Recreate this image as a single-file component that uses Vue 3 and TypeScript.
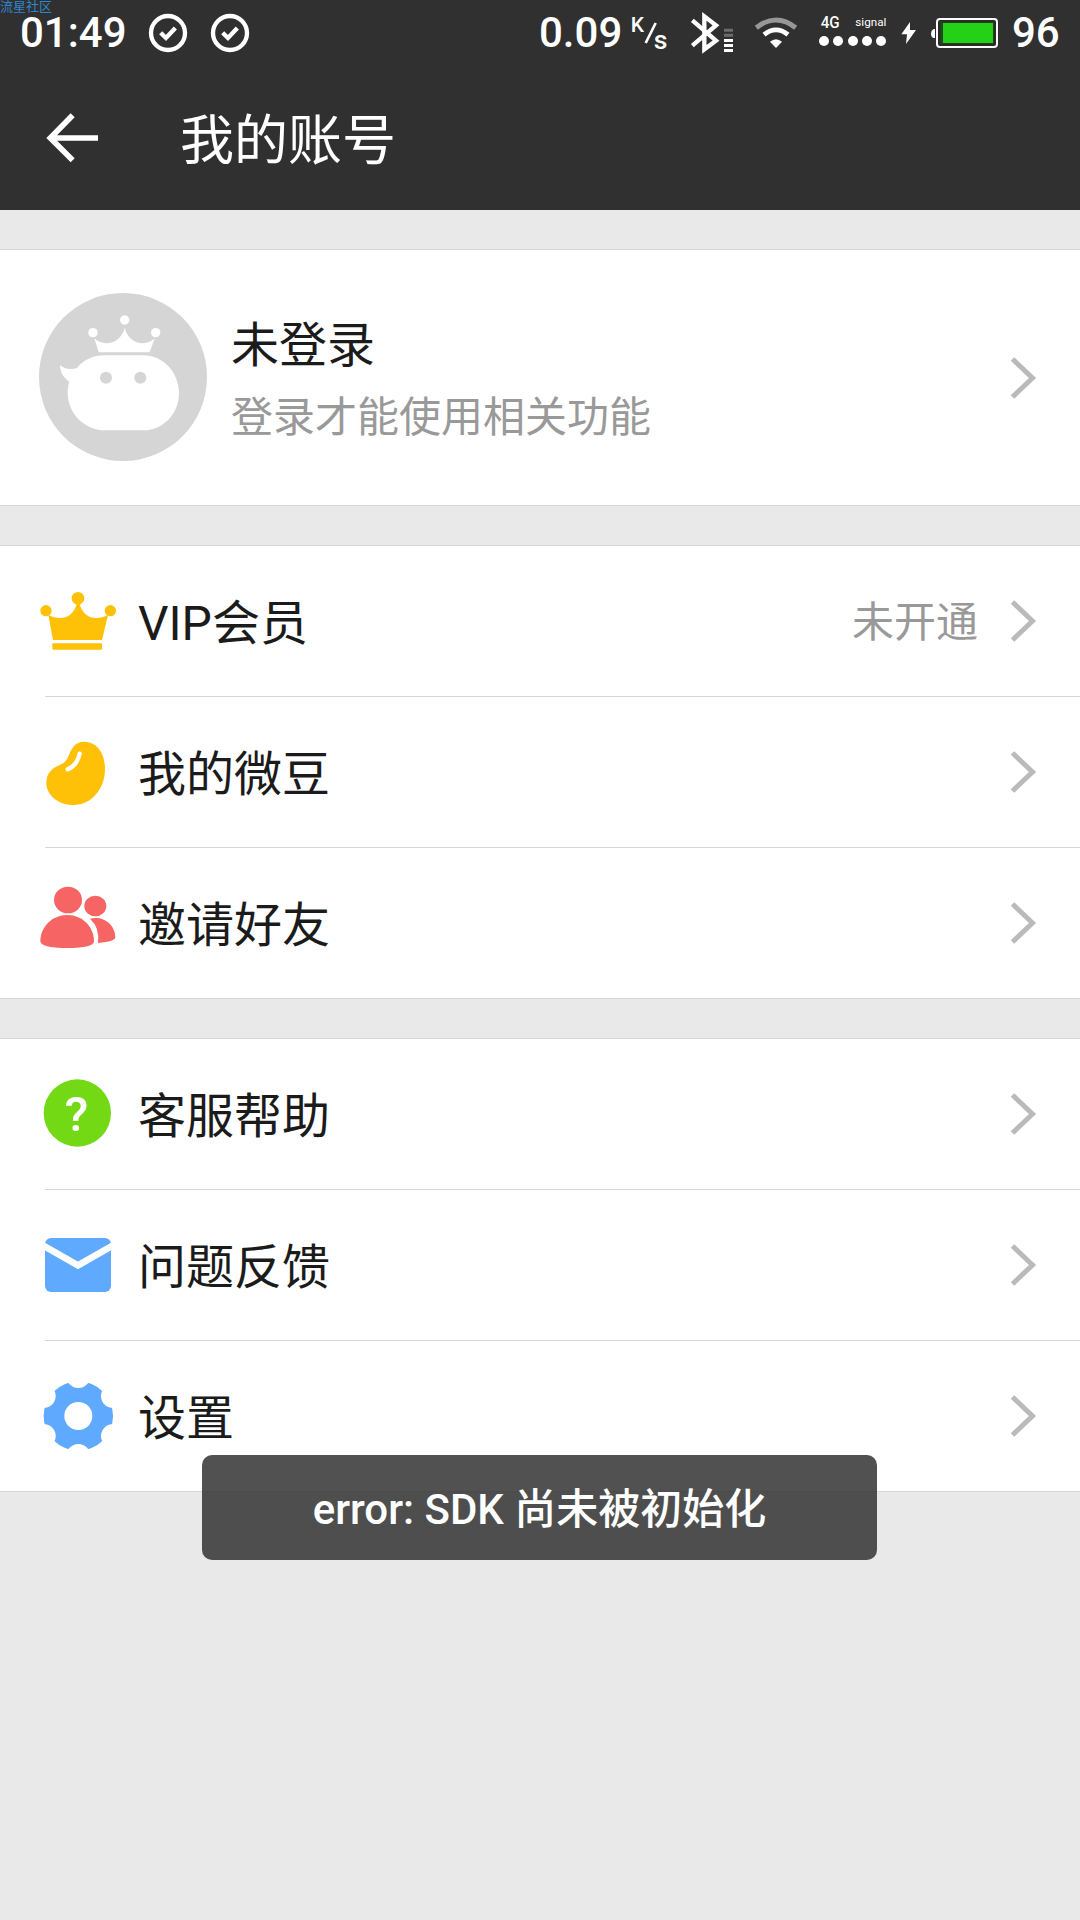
<script setup lang="ts">
type IconName = 'crown' | 'bean' | 'friends' | 'help' | 'mail' | 'gear'

interface MenuItem {
  icon: IconName
  label: string
  value?: string
}

const groups: MenuItem[][] = [
  [
    { icon: 'crown', label: 'VIP会员', value: '未开通' },
    { icon: 'bean', label: '我的微豆' },
    { icon: 'friends', label: '邀请好友' },
  ],
  [
    { icon: 'help', label: '客服帮助' },
    { icon: 'mail', label: '问题反馈' },
    { icon: 'gear', label: '设置' },
  ],
]

const viewBoxes: Record<IconName, string> = {
  crown: '108 18 270 450',
  bean: '108 471 270 450',
  friends: '108 24 270 450',
  help: '108 597 270 450',
  mail: '108 -30 270 450',
  gear: '108 423 270 450',
}

const notchAngles = [0, 60, 120, 180, 240, 300]
</script>

<template>
  <div class="screen">
    <header class="top">
      <div class="status">
        <span class="watermark">流星社区</span>
        <span class="time">01:49</span>
        <svg class="checks" viewBox="420 0 360 240">
          <g fill="none" stroke="#fff">
            <circle cx="504" cy="99" r="51" stroke-width="13" />
            <path d="M482 98l16 16 28-30" stroke-width="13" />
            <circle cx="690" cy="99" r="51" stroke-width="13" />
            <path d="M668 98l16 16 28-30" stroke-width="13" />
          </g>
        </svg>
        <span class="spacer"></span>
        <span class="speed">0.09</span>
        <svg class="unit" viewBox="324 0 135 240" fill="#fff">
          <text x="332" y="97" font-size="63" font-weight="500">K</text>
          <path d="M377 129L407 69" stroke="#fff" stroke-width="8" />
          <text x="401" y="146" font-size="80" font-weight="500">s</text>
        </svg>
        <svg class="bluetooth" viewBox="495 0 165 240">
          <path d="M517 61L588 122L553 148V49L588 76L517 137" fill="none" stroke="#fff" stroke-width="13" />
          <path d="M612 91h27M612 106h27" stroke="#6c6c6c" stroke-width="9" />
          <path d="M612 121.500h27M612 136.500h27M612 151.500h27" stroke="#fff" stroke-width="9" />
        </svg>
        <svg class="wifi" viewBox="690 0 156 240">
          <path d="M709 83Q768 37 827 83" fill="none" stroke="#979797" stroke-width="15" />
          <path d="M732 104Q768 75 804 104" fill="none" stroke="#fff" stroke-width="14" />
          <path d="M750 125Q768 110 786 125L768 144z" fill="#fff" />
        </svg>
        <svg class="signal" viewBox="45 0 225 240" fill="#fff">
          <text x="62" y="83" font-size="48" textLength="57" lengthAdjust="spacingAndGlyphs">4G</text>
          <text class="thin" x="166" y="77" font-size="31" textLength="93" lengthAdjust="spacingAndGlyphs">signal</text>
          <circle cx="72" cy="123" r="15" />
          <circle cx="114" cy="123" r="15" />
          <circle cx="159" cy="123" r="15" />
          <circle cx="201" cy="123" r="15" />
          <circle cx="243" cy="123" r="15" />
        </svg>
        <svg class="battery" viewBox="291 0 315 240">
          <path d="M330 66L304 103h17l-3 29 30-42h-18z" fill="#fff" />
          <path d="M405 87v27h-4q-8-3-8-13t8-14z" fill="#fff" />
          <rect x="411" y="57" width="180" height="84" rx="9" fill="#2b2b2b" stroke="#fff" stroke-width="6" />
          <rect x="421" y="67" width="160" height="64" fill="#204a1c" />
          <rect x="429" y="69" width="150" height="60" fill="#23d216" />
        </svg>
        <span class="percent">96</span>
      </div>
      <div class="bar">
        <svg class="back" viewBox="135 0 165 390">
          <path d="M294 174H155M218 106L151 174L218 241" fill="none" stroke="#fff" stroke-width="17" />
        </svg>
        <h1>我的账号</h1>
      </div>
    </header>

    <main>
      <section class="card profile">
        <svg class="avatar" viewBox="57 68 504 504">
          <circle cx="309" cy="320" r="252" fill="#d5d5d5" />
          <g fill="#fff">
            <path d="M148 334C132 325 121 308 120 285C133 296 152 299 171 293C190 268 221 255 255 255H370C430 255 477 307 477 368C477 430 430 480 370 480H255C195 480 143 430 143 368C143 355 145 344 148 334z" />
            <circle cx="314" cy="149" r="14" />
            <circle cx="219" cy="187" r="14" />
            <circle cx="407" cy="187" r="14" />
            <path d="M236 246L223 204C250 230 300 223 314 173C328 223 377 230 404 204L389 246z" />
          </g>
          <circle cx="258" cy="322" r="18" fill="#d5d5d5" />
          <circle cx="361" cy="322" r="18" fill="#d5d5d5" />
        </svg>
        <div class="who">
          <span class="name">未登录</span>
          <span class="hint">登录才能使用相关功能</span>
        </div>
        <svg class="chevron" viewBox="0 0 32 50"><path d="M4.500 6L24.500 25L4.500 44" /></svg>
      </section>

      <section v-for="(group, g) in groups" :key="g" class="card">
        <div v-for="item in group" :key="item.label" class="row">
          <svg class="icon" :viewBox="viewBoxes[item.icon]">
            <g v-if="item.icon === 'crown'" fill="#ffc107">
              <circle cx="234" cy="175" r="19" />
              <circle cx="138" cy="212" r="17" />
              <circle cx="331" cy="212" r="17" />
              <path d="M145 225C172 238 216 245 231 190H238C253 245 297 238 324 225L306 300H159z" />
              <rect x="157" y="310" width="149" height="19" rx="3" />
            </g>
            <g v-else-if="item.icon === 'bean'">
              <path d="M253 605C291 605 315 640 315 687C315 747 274 795 220 795C172 795 139 764 139 729C139 705 151 688 171 679C190 671 199 665 207 645C216 620 229 605 253 605z" fill="#ffc107" />
              <path d="M239 641Q232 676 203 688" fill="none" stroke="#fff" stroke-width="13" stroke-linecap="round" />
            </g>
            <g v-else-if="item.icon === 'friends'" fill="#f76464">
              <ellipse cx="204" cy="180" rx="42" ry="40" />
              <path d="M202 225C248 225 282 262 282 303Q282 324 202 324Q121 324 121 303C121 262 156 225 202 225z" />
              <ellipse cx="286" cy="198" rx="33" ry="31" />
              <path d="M270 236C309 226 346 253 346 292Q346 305 294 309Q300 263 270 236z" />
            </g>
            <g v-else-if="item.icon === 'help'">
              <circle cx="232" cy="819" r="101" fill="#74d915" />
              <text x="229" y="872" fill="#fff" font-size="147" font-weight="500" text-anchor="middle">?</text>
            </g>
            <g v-else-if="item.icon === 'mail'">
              <rect x="135" y="114" width="198" height="162" rx="18" fill="#5fa9ff" />
              <path d="M130 137L234 196L338 137" fill="none" stroke="#fff" stroke-width="20" />
            </g>
            <g v-else>
              <circle cx="235" cy="648" r="104" fill="#5fa9ff" />
              <circle v-for="a in notchAngles" :key="a" cx="235" cy="528" r="36" fill="#fff" :transform="`rotate(${a} 235 648)`" />
              <circle cx="235" cy="648" r="42" fill="#fff" />
            </g>
          </svg>
          <span class="label">{{ item.label }}</span>
          <span v-if="item.value" class="value">{{ item.value }}</span>
          <svg class="chevron" viewBox="0 0 32 50"><path d="M4.500 6L24.500 25L4.500 44" /></svg>
        </div>
      </section>
    </main>

    <div class="toast">error: SDK 尚未被初始化</div>
  </div>
</template>

<style>
body {
  margin: 0;
  background: #e9e9e9;
}
</style>

<style scoped>
.screen {
  position: relative;
  width: 1080px;
  height: 1920px;
  overflow: hidden;
  background: #e9e9e9;
  color: #1b1b1b;
  font-family: Roboto, "Noto Sans CJK SC", sans-serif;
}
svg {
  display: block;
  flex: none;
}
.top {
  height: 210px;
  background: #303030;
  color: #fff;
}
.status {
  position: relative;
  display: flex;
  height: 80px;
  font-size: 42px;
  font-weight: 500;
  line-height: 66px;
}
.status svg {
  height: 80px;
}
.watermark {
  position: absolute;
  left: 0;
  top: 0;
  color: #2f86cc;
  font-size: 13px;
  font-weight: 400;
  line-height: 13px;
}
.thin {
  font-weight: 400;
}
.time {
  width: 120px;
  padding-left: 20px;
}
.checks {
  width: 120px;
}
.spacer {
  flex: 1;
}
.speed {
  width: 89px;
}
.unit {
  width: 45px;
}
.bluetooth {
  width: 55px;
  margin-left: 12px;
}
.wifi {
  width: 52px;
  margin-left: 10px;
}
.signal {
  width: 75px;
  margin-left: 13px;
}
.battery {
  width: 105px;
  margin-left: 7px;
}
.percent {
  width: 68px;
  margin-left: 10px;
}
.bar {
  display: flex;
  height: 130px;
}
.back {
  width: 55px;
  height: 130px;
  margin-left: 45px;
}
h1 {
  margin: 0 0 0 80px;
  font-size: 54px;
  font-weight: 400;
  line-height: 123px;
}
.card {
  margin-top: 39px;
  border-top: 1px solid #d6d6d6;
  border-bottom: 1px solid #d6d6d6;
  background: #fff;
}
.profile {
  display: flex;
  align-items: center;
  height: 255px;
  padding: 0 40px 0 39px;
}
.avatar {
  width: 168px;
  height: 168px;
  margin-bottom: 2px;
}
.who {
  display: flex;
  flex: 1;
  flex-direction: column;
  margin-left: 24px;
  padding-top: 8px;
}
.name {
  font-size: 48px;
  line-height: 72px;
}
.hint {
  color: #999;
  font-size: 42px;
  line-height: 72px;
}
.row {
  display: flex;
  position: relative;
  align-items: center;
  height: 150px;
  padding: 0 40px 0 36px;
}
.row + .row {
  margin-top: 1px;
}
.row + .row::before {
  position: absolute;
  top: -1px;
  right: 0;
  left: 45px;
  height: 1px;
  background: #d6d6d6;
  content: "";
}
.icon {
  width: 90px;
  height: 150px;
}
.label {
  flex: 1;
  margin-left: 12px;
  padding-bottom: 5px;
  font-size: 48px;
}
.value {
  margin-right: 30px;
  padding-bottom: 5px;
  color: #999;
  font-size: 42px;
}
.chevron {
  width: 32px;
  height: 50px;
  fill: none;
  stroke: #bababa;
  stroke-width: 5;
}
.toast {
  position: absolute;
  top: 1455px;
  left: 202px;
  box-sizing: border-box;
  width: 675px;
  height: 105px;
  padding-top: 2px;
  border-radius: 10px;
  background: rgba(50, 50, 50, 0.85);
  color: #fff;
  font-size: 42px;
  font-weight: 500;
  line-height: 105px;
  text-align: center;
}
</style>
